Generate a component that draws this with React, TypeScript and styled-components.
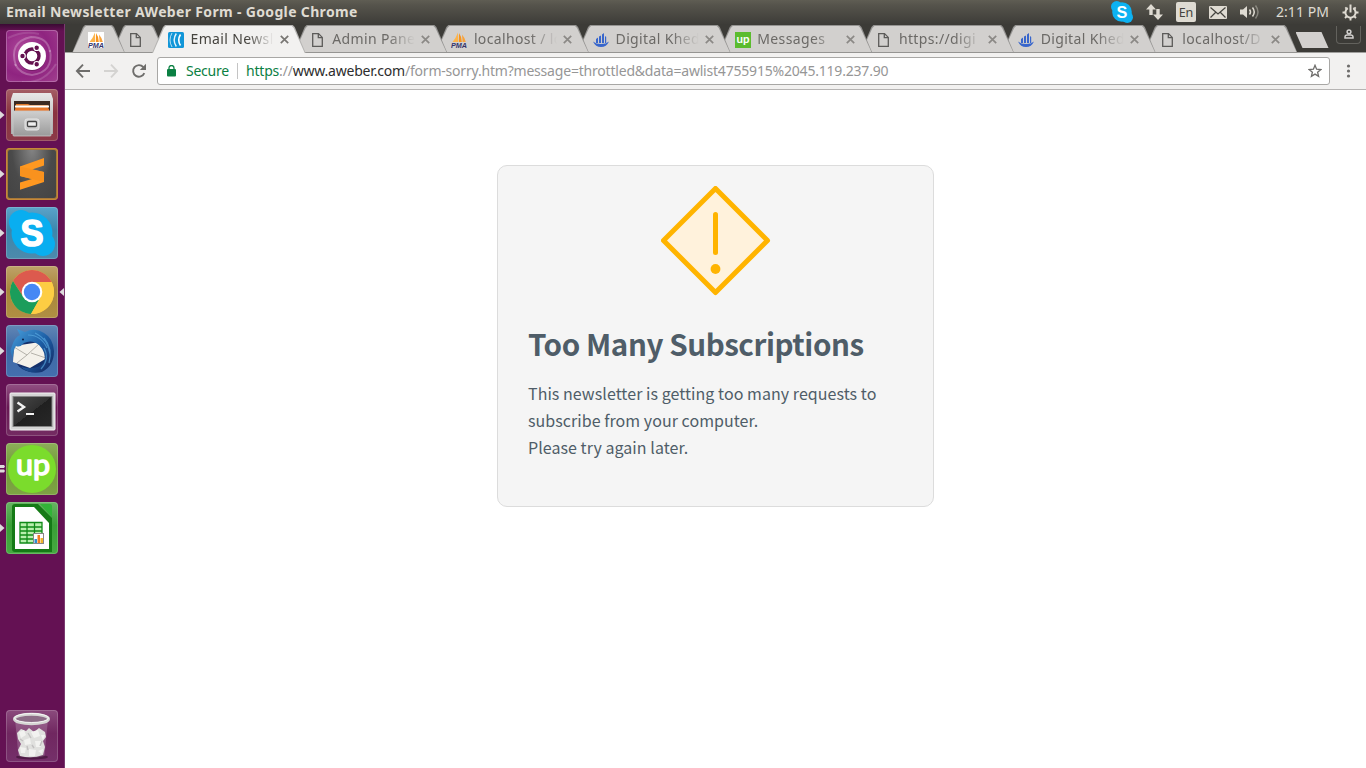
import React from "react";
import styled, { createGlobalStyle } from "styled-components";

const UI = '"Noto Sans", "Open Sans", sans-serif';

const GlobalStyle = createGlobalStyle`
  html, body { margin: 0; padding: 0; overflow: hidden; }
  body { font-family: ${UI}; }
  svg { display: block; flex: none; }
`;

const Desktop = styled.div`
  width: 1366px;
  height: 768px;
  display: flex;
  flex-direction: column;
  background: #fff;
`;

const Panel = styled.header`
  height: 24px;
  flex: none;
  display: flex;
  align-items: center;
  justify-content: space-between;
  padding: 0 7px 0 6px;
  box-sizing: border-box;
  background: linear-gradient(#5f5d53 0, #56544c 20%, #3d3c38 100%);
  color: #dfdbd2;
`;

const WindowTitle = styled.span`
  font-size: 14px;
  font-weight: 700;
  letter-spacing: 0.34px;
  line-height: 24px;
  white-space: nowrap;
`;

const Indicators = styled.div`
  display: flex;
  align-items: center;
  height: 24px;
`;

const Indicator = styled.span<{ $gap: number }>`
  display: flex;
  margin-right: ${(p) => p.$gap}px;
`;

const LangBadge = styled.span`
  width: 20px;
  height: 20px;
  border-radius: 2px;
  background: #dfdbd2;
  color: #44433e;
  font-size: 12.5px;
  line-height: 21px;
  text-align: center;
`;

const Clock = styled.span`
  width: 54px;
  margin-right: 12px;
  font-size: 14px;
  letter-spacing: 0.05px;
  line-height: 24px;
  white-space: nowrap;
`;

const Workspace = styled.div`
  flex: 1;
  display: flex;
  min-height: 0;
`;

const Launcher = styled.nav`
  width: 65px;
  flex: none;
  box-sizing: border-box;
  display: flex;
  flex-direction: column;
  gap: 7px;
  padding: 6px 0 6px;
  border-right: 1px solid #7b3a70;
  background: linear-gradient(#3a0a33 0, #641153 7px);
`;

const Slot = styled.div<{ $last?: boolean }>`
  height: 52px;
  display: flex;
  align-items: center;
  ${(p) => p.$last && "margin-top: auto;"}
`;

const Tile = styled.div<{ $bg: string; $edge?: string }>`
  width: 52px;
  height: 52px;
  flex: none;
  box-sizing: border-box;
  border-radius: 4px;
  overflow: hidden;
  background: ${(p) => p.$bg};
  box-shadow: inset 0 0 0 1px ${(p) => p.$edge ?? "rgba(255,255,255,.18)"};
`;

const Browser = styled.main`
  flex: 1;
  min-width: 0;
  display: flex;
  flex-direction: column;
`;

const TabStrip = styled.div`
  height: 29px;
  flex: none;
  display: flex;
  align-items: flex-start;
  box-sizing: border-box;
  padding: 1px 5px 0 7px;
  background: linear-gradient(#3c3b37 0 28px, #a09f9d 28px);
`;

const Tab = styled.div<{ $active?: boolean; $pinned?: boolean; $z: number }>`
  position: relative;
  z-index: ${(p) => (p.$active ? 30 : p.$z)};
  width: ${(p) => (p.$pinned ? 53 : 153.7)}px;
  height: 28px;
  flex: none;
  margin-right: ${(p) => (p.$pinned ? -13 : -12)}px;
  box-sizing: border-box;
  padding: 0 14px 0 16px;
  display: flex;
  align-items: center;
  color: ${(p) => (p.$active ? "#46443f" : "#6b6966")};

  &::before,
  &::after {
    content: "";
    position: absolute;
    z-index: -1;
    inset: 0;
    clip-path: polygon(0 100%, 11px 2px, 13px 0, calc(100% - 13px) 0, calc(100% - 11px) 2px, 100% 100%);
    background: ${(p) => (p.$active ? "#b5b4b2" : "#959492")};
  }
  &::after {
    inset: 1px 1px ${(p) => (p.$active ? 0 : 1)}px 1px;
    background: ${(p) => (p.$active ? "#f2f1f0" : "#d2d0ce")};
  }
`;

const Favicon = styled.span`
  width: 16px;
  height: 16px;
  flex: none;
  display: flex;
  margin-top: 1px;
`;

const TabTitle = styled.span`
  width: 88px;
  margin-left: 6.5px;
  flex: none;
  white-space: nowrap;
  font-size: 14px;
  line-height: 26px;
  letter-spacing: 0.36px;
  mask-image: linear-gradient(90deg, #000 56px, transparent 83px);
`;

const Close = styled.svg`
  margin: 1px 0 0 1px;
`;

const NewTab = styled.div`
  width: 33px;
  height: 16px;
  margin: 7px 0 0 10px;
  flex: none;
  clip-path: polygon(0 0, 26px 0, 33px 100%, 7px 100%);
  background: #d2d0ce;
`;

const Profile = styled.div`
  width: 25px;
  height: 18px;
  box-sizing: border-box;
  margin: 1px 0 0 auto;
  border: 1px solid #63625d;
  border-top: 0;
  border-radius: 0 0 4px 4px;
  display: flex;
  justify-content: center;
  padding-top: 3px;
`;

const Toolbar = styled.div`
  height: 37px;
  flex: none;
  box-sizing: border-box;
  border-bottom: 1px solid #b6b4b3;
  display: flex;
  align-items: center;
  padding: 0 10px 0 10px;
  background: #f2f1f0;
`;

const NavButton = styled.span`
  width: 28px;
  display: flex;
`;

const Omnibox = styled.div`
  flex: 1;
  height: 28px;
  box-sizing: border-box;
  margin: 0 10px 1px -2px;
  padding: 0 7px 0 9px;
  border: 1px solid #a8a7a5;
  border-radius: 3px;
  background: #fff;
  display: flex;
  align-items: center;
  font-size: 14px;
  line-height: 26px;
  white-space: nowrap;
`;

const Secure = styled.span`
  width: 51px;
  margin-left: 10px;
  color: #0b8043;
  letter-spacing: -0.25px;
`;

const Divider = styled.span`
  width: 1px;
  height: 16px;
  margin-right: 8px;
  background: #c4c4c4;
`;

const Url = styled.span`
  flex: 1;
  color: #969696;
  letter-spacing: -0.2px;
`;

const UrlPart = styled.span<{ $color: string }>`
  color: ${(p) => p.$color};
`;

const Page = styled.section`
  flex: 1;
  display: flex;
  justify-content: center;
  align-items: flex-start;
  padding-top: 75px;
  background: #fff;
`;

const Card = styled.article`
  width: 437px;
  height: 342px;
  box-sizing: border-box;
  border: 1px solid #dcdcdc;
  border-radius: 10px;
  background: #f5f5f5;
  padding: 20px 30px;
  color: #4f5d68;
  font-family: "Noto Sans CJK SC", "Noto Sans", sans-serif;
`;

const Warning = styled.svg`
  margin: 0 auto;
`;

const Heading = styled.h1`
  margin: 26px 0 0;
  font-size: 29.6px;
  line-height: 44px;
  font-weight: 700;
  letter-spacing: -0.44px;
  white-space: nowrap;
`;

const Message = styled.p`
  margin: 14px 0 0;
  font-size: 16px;
  line-height: 27px;
  letter-spacing: 0.055px;
  white-space: nowrap;
`;

/* ---------- favicons ---------- */

const PmaIcon = ({ plain }: { plain?: boolean }) => (
  <svg width="16" height="16" viewBox="0 0 16 16">
    {plain ? null : <rect width="16" height="16" fill="#fff" />}
    <path d="M7 .5 V10 H1.500 Q5 6 7 .5 Z" fill="#fdb44a" />
    <path d="M8 1 Q11 5 10.800 10 H7.800 Z" fill="#f7941d" />
    <path d="M11 2.500 Q14 6 14.800 10 H11.600 Z" fill="#f9a23a" />
    <text x="0" y="15.700" fontSize="6.500" fontWeight="700" fontStyle="italic" fontFamily="Liberation Sans, sans-serif" textLength="16" lengthAdjust="spacingAndGlyphs" fill="#36346b">PMA</text>
  </svg>
);

const FileIcon = () => (
  <svg width="16" height="16" viewBox="0 0 16 16" fill="none" stroke="#5c5b59" strokeWidth="1.300">
    <path d="M2.700 1.600 H8.500 L12.300 5.400 V14.400 H2.700 Z M8.300 1.800 V5.600 H12" />
  </svg>
);

const AweberIcon = () => (
  <svg width="16" height="16" viewBox="0 0 16 16" fill="none" stroke="#fff">
    <rect width="16" height="16" rx="1.500" fill="#1296d8" stroke="none" />
    <path d="M4 1 Q0 8 4 15" strokeWidth="1" opacity=".7" />
    <path d="M8.300 1.500 Q4 8 8.300 14.500" strokeWidth="1.400" opacity=".9" />
    <path d="M12.500 2.500 Q9 8 12.500 13.500" strokeWidth="1.600" />
  </svg>
);

const ShipIcon = () => (
  <svg width="16" height="16" viewBox="0 0 16 16" fill="#3866cc">
    <path d="M3 7 L5 5.500 V11 H3 Z M6 4.500 L8 3.500 V11 H6 Z M9 2.500 L11 1 V11 H9 Z M12 4 L13.200 5 V11 H12 Z" />
    <path d="M0 9.500 Q3 12 8 12 Q13 12 16 9.500 Q13.500 15 8 15 Q2.500 15 0 9.500 Z" />
  </svg>
);

const UpIcon = () => (
  <svg width="16" height="16" viewBox="0 0 16 16">
    <rect width="16" height="16" fill="#5bbc2e" />
    <text x="1.500" y="10.500" fontSize="10.500" fontWeight="700" fontFamily="Lato, sans-serif" textLength="13" lengthAdjust="spacingAndGlyphs" fill="#fff">up</text>
  </svg>
);

/* ---------- launcher artwork ---------- */

const Art = ({ children }: { children: React.ReactNode }) => (
  <svg width="52" height="52" viewBox="0 0 52 52">{children}</svg>
);

const DashArt = () => (
  <Art>
    <g fill="none" stroke="#fff" strokeOpacity=".25" strokeWidth="2">
      <path d="M10 36 Q2 12 25 7 Q42 7 44 22" />
      <path d="M44 20 Q48 42 26 45 Q14 44 9 34" />
      <path d="M2 8 Q18 0 33 4" strokeOpacity=".12" />
      <path d="M16 52 Q38 54 50 34" strokeOpacity=".15" />
    </g>
    <circle cx="26" cy="27" r="14" fill="#450a3d" opacity=".4" />
    <circle cx="26" cy="26" r="14" fill="#fff" />
    <circle cx="26" cy="26" r="7" fill="none" stroke="#64114f" strokeWidth="3.400" />
    <g stroke="#fff" strokeWidth="1.200" fill="#64114f">
      <circle cx="16.500" cy="26" r="2.800" />
      <circle cx="30.700" cy="17.700" r="2.800" />
      <circle cx="30.700" cy="34.300" r="2.800" />
    </g>
  </Art>
);

const FilesArt = () => (
  <Art>
    <defs>
      <linearGradient id="cab" x2="0" y2="1"><stop stopColor="#e8e8e8" /><stop offset="1" stopColor="#a9a9a9" /></linearGradient>
      <linearGradient id="drawer" x2="0" y2="1"><stop stopColor="#cfcfcf" /><stop offset="1" stopColor="#9a9a9a" /></linearGradient>
    </defs>
    <path d="M7 4 H45 L47 10 V45 H5 V10 Z" fill="url(#cab)" />
    <rect x="8" y="12" width="36" height="12" fill="#3b2a22" />
    <path d="M10 15 H22 L24 16 H42 V24 H9 Z" fill="#e07a2c" />
    <path d="M9 17.500 H43" stroke="#fff" strokeWidth="1.800" />
    <path d="M9 19.500 H43 V22 H9 Z" fill="#e8762b" />
    <rect x="7" y="22" width="38" height="25" rx="1" fill="url(#drawer)" stroke="#c9c9c9" strokeWidth=".8" />
    <rect x="19" y="30" width="14" height="11" rx="2" fill="#cfcfcf" stroke="#e6e6e6" />
    <rect x="21.500" y="32.500" width="9" height="5" rx="1" fill="#eee" stroke="#444" strokeWidth="1.300" />
  </Art>
);

const SublimeArt = () => (
  <Art>
    <path d="M38 10 L14 18.600 V28 L26 31 L14 34.500 V41.800 L38 34 V24 L26 21.500 L38 17.500 Z" fill="#ff9820" />
    <path d="M14 18.600 V28 L38 34 V24 Z" fill="#f9921e" />
  </Art>
);

const skypeBlob = (fill: string) => (
  <g fill={fill}>
    <circle cx="26" cy="26" r="20.500" />
    <circle cx="15" cy="15" r="12" />
    <circle cx="37" cy="37" r="12" />
  </g>
);

const SkypeArt = () => (
  <Art>
    {skypeBlob("#09aef0")}
    <text x="26" y="39" textAnchor="middle" fontSize="36" fontWeight="700" fontFamily="Liberation Sans, sans-serif" fill="#fff" stroke="#fff" strokeWidth="1.600" strokeLinejoin="round" textLength="23" lengthAdjust="spacingAndGlyphs">S</text>
  </Art>
);

const ChromeArt = () => (
  <Art>
    <circle cx="26" cy="26" r="22" fill="#fecb3e" />
    <path d="M6.950 15 A22 22 0 0 1 45.050 15 L45.600 16 H26 L17.340 31 Z" fill="#dc5a4e" />
    <path d="M6.950 15 A22 22 0 0 0 25 48 L34.660 31 L26 36 L17.340 31 Z" fill="#1b9d5b" />
    <path d="M34.600 31 L25 48 A22 22 0 0 0 45.600 16 H26 Z" fill="#fdcd43" />
    <circle cx="26" cy="26" r="10.300" fill="#fff" />
    <circle cx="26" cy="26" r="8.200" fill="#4688f4" />
  </Art>
);

const ThunderbirdArt = () => (
  <Art>
    <defs>
      <linearGradient id="bird" x2="1" y2="1"><stop stopColor="#4aa2de" /><stop offset=".5" stopColor="#1d5fa6" /><stop offset="1" stopColor="#13245c" /></linearGradient>
    </defs>
    <circle cx="27" cy="27" r="20" fill="#14306b" />
    <path d="M8 21 L34 17 L41 33 L24 43 L7 37 Z" fill="#f4f1ea" />
    <path d="M8 22 L21 30 L34 18 M21 30 L11 38 M25 28 L40 33" fill="none" stroke="#b5b2aa" />
    <path d="M6 21 Q8 13 14 10 L11 4 L19 7 Q29 2 38 8 Q47 13 48 26 Q48 41 36 47 Q24 50 15 42 Q32 46 38 37 Q41 28 33 20 Q26 14 18 18 Q14 23 10 21 Q7 25 7 33 Q3 26 6 21 Z" fill="url(#bird)" />
    <path d="M22 10 Q35 10 41 23 M29 8 Q42 14 44 29 M38 13 Q47 24 43 38 M38 23 Q44 34 35 44" fill="none" stroke="#5fb0e6" strokeWidth="1.200" opacity=".6" />
    <circle cx="17" cy="14.500" r="1" fill="#091d45" />
  </Art>
);

const TerminalArt = () => (
  <Art>
    <defs><linearGradient id="screen" x2="1" y2="1"><stop stopColor="#4a4a4a" /><stop offset=".5" stopColor="#303030" /><stop offset=".5" stopColor="#202020" /><stop offset="1" stopColor="#282828" /></linearGradient></defs>
    <rect x="4" y="9" width="45" height="37" rx="1" fill="#d4d4d4" stroke="#f3f3f3" />
    <rect x="7" y="12.500" width="39" height="30" fill="url(#screen)" stroke="#858585" />
    <path d="M11.500 18.500 L18 23 L11.500 27.500" fill="none" stroke="#f2f2f2" strokeWidth="2.400" />
    <path d="M20 30 H28" stroke="#f2f2f2" strokeWidth="2" />
  </Art>
);

const UpworkArt = () => (
  <Art>
    <circle cx="26" cy="26" r="24" fill="#7bdc2c" />
    <text x="10" y="32" fontSize="29" fontWeight="400" fontFamily="Lato, sans-serif" textLength="34" lengthAdjust="spacingAndGlyphs" fill="#fff" stroke="#fff" strokeWidth="1.500" strokeLinejoin="round">up</text>
  </Art>
);

const CalcArt = () => (
  <Art>
    <path d="M9 2 H32 L46 16 V50 H9 Q6 50 6 47 V5 Q6 2 9 2 Z" fill="#157a16" />
    <path d="M9 5 H28 L43 21 V47 H9 Z" fill="#fff" />
    <path d="M34 2 H44 Q46 2 46 4 V15 Z" fill="#32b438" />
    <path d="M14 20.500 H36 V41 H14 Z M14 25 H36 M14 29 H36 M14 33 H36 M14 37 H36 M21 20.500 V41 M28.500 20.500 V41" fill="#b8efad" stroke="#108a18" strokeWidth="1.300" />
    <rect x="27.500" y="31.500" width="10" height="10" fill="#fff" stroke="#878787" />
    <path d="M28.500 37 h2.500 v4 h-2.500 Z" fill="#2d8dce" />
    <path d="M31.500 33 h2.500 v8 h-2.500 Z" fill="#f07b22" />
    <path d="M34.500 36 h2.500 v5 h-2.500 Z" fill="#efb32b" />
  </Art>
);

const TrashArt = () => (
  <Art>
    <ellipse cx="26" cy="47" rx="16" ry="2.500" fill="#2b0824" opacity=".5" />
    <path d="M9 9 L12.500 46 Q26 49 38.500 46 L42 9 Z" fill="#e8dce7" opacity=".22" />
    <path d="M11 23 L15 19 L20 21 L23 18 L28 22 L33 18 L39 22 L40 27 L37 31 L39 37 L37 45 Q26 49 14 46 L12 40 L15 34 L12 29 Z" fill="#e0e0de" />
    <g fill="#f2f2f0">
      <path d="M13 22 L18 20 L20 25 L15 28 Z M25 22 L32 20 L34 26 L28 28 Z M35 25 L39 25 L37 30 Z M18 30 L24 28 L25 34 L19 35 Z M29 31 L35 31 L35 37 L30 37 Z M14 37 L20 38 L19 43 L15 43 Z M23 39 L30 40 L29 46 L23 46 Z M32 41 L37 39 L36 44 Z" />
    </g>
    <path d="M14 29 L17 31 M22 23 L25 28 M26 35 L28 38 M21 36 L22 40 M36 31 L34 36" fill="none" stroke="#c2c0c0" strokeWidth="1.400" />
    <ellipse cx="25.500" cy="9" rx="17" ry="4.800" fill="#8d6d87" stroke="#d5d5d3" strokeWidth="3" />
    <ellipse cx="25.500" cy="8" rx="17" ry="4.500" fill="none" stroke="#fff" strokeWidth=".8" />
  </Art>
);

type LauncherApp = { name: string; bg: string; edge?: string; art: React.ReactNode; marks: number; focused?: boolean };

const apps: LauncherApp[] = [
  { name: "dash", bg: "radial-gradient(circle at 35% 40%, #b04a9d, #8f2480 55%, #a1408f)", edge: "rgba(255,255,255,.25)", art: <DashArt />, marks: 0 },
  { name: "files", bg: "linear-gradient(#a55f66, #8a3340 45%, #8c3a48)", art: <FilesArt />, marks: 1 },
  { name: "sublime", bg: "radial-gradient(ellipse at 50% 0, #858585, #4a4a4a 55%, #424242)", edge: "#c4893a, inset 0 0 0 2px #a87838", art: <SublimeArt />, marks: 1 },
  { name: "skype", bg: "linear-gradient(#5aa4ca, #3d86ac 45%, #4d8aac)", art: <SkypeArt />, marks: 1 },
  { name: "chrome", bg: "linear-gradient(#bfa269, #a9873b 45%, #b08f43)", art: <ChromeArt />, marks: 1, focused: true },
  { name: "thunderbird", bg: "linear-gradient(#6287b5, #3d69a6 45%, #446fae)", art: <ThunderbirdArt />, marks: 1 },
  { name: "terminal", bg: "linear-gradient(#925083, #681854 45%, #742c62)", art: <TerminalArt />, marks: 0 },
  { name: "upwork", bg: "linear-gradient(#8cae59, #739c38 45%, #7ea345)", art: <UpworkArt />, marks: 2 },
  { name: "calc", bg: "linear-gradient(#68b463, #3a9f37 45%, #46aa41)", art: <CalcArt />, marks: 1 },
];

const RunningPip = ({ marks }: { marks: number }) => (
  <svg width="6" height="12" viewBox="0 0 6 12" fill="#dedbdc">
    {marks === 1 && <path d="M0 2 L4.500 6 L0 10 Z" />}
    {marks === 2 && <path d="M0 2 H4 L5 3.500 L4 5 H0 Z M0 6.500 H4 L5 8 L4 9.500 H0 Z" />}
  </svg>
);

const FocusPip = () => (
  <svg width="6" height="12" viewBox="0 0 6 12" fill="#dedbdc">
    <path d="M6 2 L1.500 6 L6 10 Z" />
  </svg>
);

type TabData = { title?: string; icon: React.ReactNode; active?: boolean };

const tabs: TabData[] = [
  { icon: <PmaIcon /> },
  { icon: <FileIcon /> },
  { title: "Email Newsl", icon: <AweberIcon />, active: true },
  { title: "Admin Pane", icon: <FileIcon /> },
  { title: "localhost / lo", icon: <PmaIcon plain /> },
  { title: "Digital Khed", icon: <ShipIcon /> },
  { title: "Messages", icon: <UpIcon /> },
  { title: "https://digi", icon: <FileIcon /> },
  { title: "Digital Khed", icon: <ShipIcon /> },
  { title: "localhost/D", icon: <FileIcon /> },
];

const Tray = () => (
  <Indicators>
    <Indicator $gap={13}>
      <svg width="22" height="22" viewBox="3 3 46 46">
        {skypeBlob("#0db2f2")}
        <text x="26" y="38" textAnchor="middle" fontSize="34" fontWeight="700" fontFamily="Liberation Sans, sans-serif" fill="#fff">S</text>
      </svg>
    </Indicator>
    <Indicator $gap={13}>
      <svg width="17" height="16" viewBox="0 0 17 16" fill="#dfdbd2">
        <path d="M5 0 L10 5.500 H6.700 V11 H3.300 V5.500 H0 Z" />
        <path d="M12 16 L7 10.500 H10.300 V5 H13.700 V10.500 H17 Z" />
      </svg>
    </Indicator>
    <Indicator $gap={13}><LangBadge>En</LangBadge></Indicator>
    <Indicator $gap={13}>
      <svg width="18" height="13" viewBox="0 0 18 13">
        <rect width="18" height="13" rx="1" fill="#dfdbd2" />
        <path d="M1.500 1.500 L9 8 L16.500 1.500 M1.500 11.500 L6.500 6.500 M16.500 11.500 L11.500 6.500" fill="none" stroke="#44433e" strokeWidth="1.200" />
      </svg>
    </Indicator>
    <Indicator $gap={15}>
      <svg width="21" height="16" viewBox="0 0 21 16" fill="none" stroke="#dfdbd2" strokeWidth="1.500">
        <path d="M0 5.500 H3 L7 2 V14 L3 10.500 H0 Z" fill="#dfdbd2" stroke="none" />
        <path d="M9.500 5.500 Q11.500 8 9.500 10.500" />
        <path d="M12.500 3.500 Q16 8 12.500 12.500" />
        <path d="M15.500 1.500 Q20.500 8 15.500 14.500" opacity=".4" />
      </svg>
    </Indicator>
    <Clock>2:11 PM</Clock>
    <svg width="17" height="17" viewBox="0 0 17 17" fill="none" stroke="#dfdbd2">
      <path d="M5.800 4.200 A5.100 5.100 0 1 0 11.200 4.200" strokeWidth="2" />
      <path d="M8.500 .5 V8.500" strokeWidth="2" />
      <path d="M3.500 8.500 H.5 M16.500 8.500 H13.500 M8.500 13.500 V16.500 M5 12 L3 14 M12 12 L14 14 M4.600 4.600 L3.300 3.300 M12.400 4.600 L13.700 3.300" strokeWidth="1.900" />
    </svg>
  </Indicators>
);

export default function App() {
  return (
    <Desktop>
      <GlobalStyle />
      <Panel>
        <WindowTitle>Email Newsletter AWeber Form - Google Chrome</WindowTitle>
        <Tray />
      </Panel>
      <Workspace>
        <Launcher>
          {apps.map((a) => (
            <Slot key={a.name}>
              <RunningPip marks={a.marks} />
              <Tile $bg={a.bg} $edge={a.edge}>{a.art}</Tile>
              {a.focused && <FocusPip />}
            </Slot>
          ))}
          <Slot $last>
            <RunningPip marks={0} />
            <Tile $bg="linear-gradient(#8b4a7d, #702760 45%, #75306a)"><TrashArt /></Tile>
          </Slot>
        </Launcher>
        <Browser>
          <TabStrip>
            {tabs.map((t, i) => (
              <Tab key={i} $active={t.active} $pinned={!t.title} $z={20 - i}>
                <Favicon>{t.icon}</Favicon>
                {t.title && (
                  <>
                    <TabTitle>{t.title}</TabTitle>
                    <Close width="9" height="9" viewBox="0 0 9 9" stroke={t.active ? "#787673" : "#8b8986"} strokeWidth="1.700">
                      <path d="M.8 .8 L8.200 8.200 M8.200 .8 L.8 8.200" />
                    </Close>
                  </>
                )}
              </Tab>
            ))}
            <NewTab />
            <Profile>
              <svg width="10" height="10" viewBox="0 0 10 10" fill="none" stroke="#d2d0ce" strokeWidth="1.500">
                <circle cx="5" cy="2.800" r="1.900" />
                <path d="M1 9 V7.800 Q1 6.400 3 6.100 H7 Q9 6.400 9 7.800 V9 Z" />
              </svg>
            </Profile>
          </TabStrip>
          <Toolbar>
            <NavButton>
              <svg width="16" height="16" viewBox="0 0 16 16" fill="none" stroke="#6e6d6b" strokeWidth="1.900"><path d="M15 8 H2.500 M8 1.700 L1.900 8 L8 14.300" /></svg>
            </NavButton>
            <NavButton>
              <svg width="16" height="16" viewBox="0 0 16 16" fill="none" stroke="#d4d3d1" strokeWidth="1.900"><path d="M1 8 H13.500 M8 1.700 L14.100 8 L8 14.300" /></svg>
            </NavButton>
            <NavButton>
              <svg width="16" height="16" viewBox="0 0 16 16"><path d="M13.300 10.200 A5.800 5.800 0 1 1 12.300 4.100" fill="none" stroke="#6e6d6b" strokeWidth="1.900" /><path d="M15 .8 V7 H8.800 Z" fill="#6e6d6b" /></svg>
            </NavButton>
            <Omnibox>
              <svg width="9" height="12" viewBox="0 0 9 12"><rect y="4" width="9" height="7.500" rx="1" fill="#0b8043" /><path d="M2 4.500 V3 A2.500 2.500 0 0 1 7 3 V4.500" fill="none" stroke="#0b8043" strokeWidth="1.300" /></svg>
              <Secure>Secure</Secure>
              <Divider />
              <Url>
                <UrlPart $color="#0b8043">https</UrlPart>://<UrlPart $color="#2d2d2d">www.aweber.com</UrlPart>/form-sorry.htm?message=throttled&amp;data=awlist4755915%2045.119.237.90
              </Url>
              <svg width="14" height="14" viewBox="0 0 14 14" fill="none" stroke="#6e6d6b" strokeWidth="1.300"><path d="M7 1.300 L8.600 5.200 L12.900 5.500 L9.600 8.200 L10.600 12.400 L7 10.100 L3.400 12.400 L4.400 8.200 L1.100 5.500 L5.400 5.200 Z" /></svg>
            </Omnibox>
            <svg width="16" height="14" viewBox="0 0 16 14" fill="#6e6d6b"><circle cx="8.500" cy="2" r="1.600" /><circle cx="8.500" cy="7" r="1.600" /><circle cx="8.500" cy="12" r="1.600" /></svg>
          </Toolbar>
          <Page>
            <Card>
              <Warning width="110" height="110" viewBox="0.5 0.5 110 110">
                <path d="M55 3 L107 55 L55 107 L3 55 Z" fill="#fff2dc" stroke="#ffb400" strokeWidth="5" strokeLinejoin="round" />
                <path d="M55 29 V67" stroke="#ffb400" strokeWidth="5" strokeLinecap="round" />
                <circle cx="55" cy="83.500" r="4.900" fill="#ffb400" />
              </Warning>
              <Heading>Too Many Subscriptions</Heading>
              <Message>
                This newsletter is getting too many requests to<br />
                subscribe from your computer.<br />
                Please try again later.
              </Message>
            </Card>
          </Page>
        </Browser>
      </Workspace>
    </Desktop>
  );
}
